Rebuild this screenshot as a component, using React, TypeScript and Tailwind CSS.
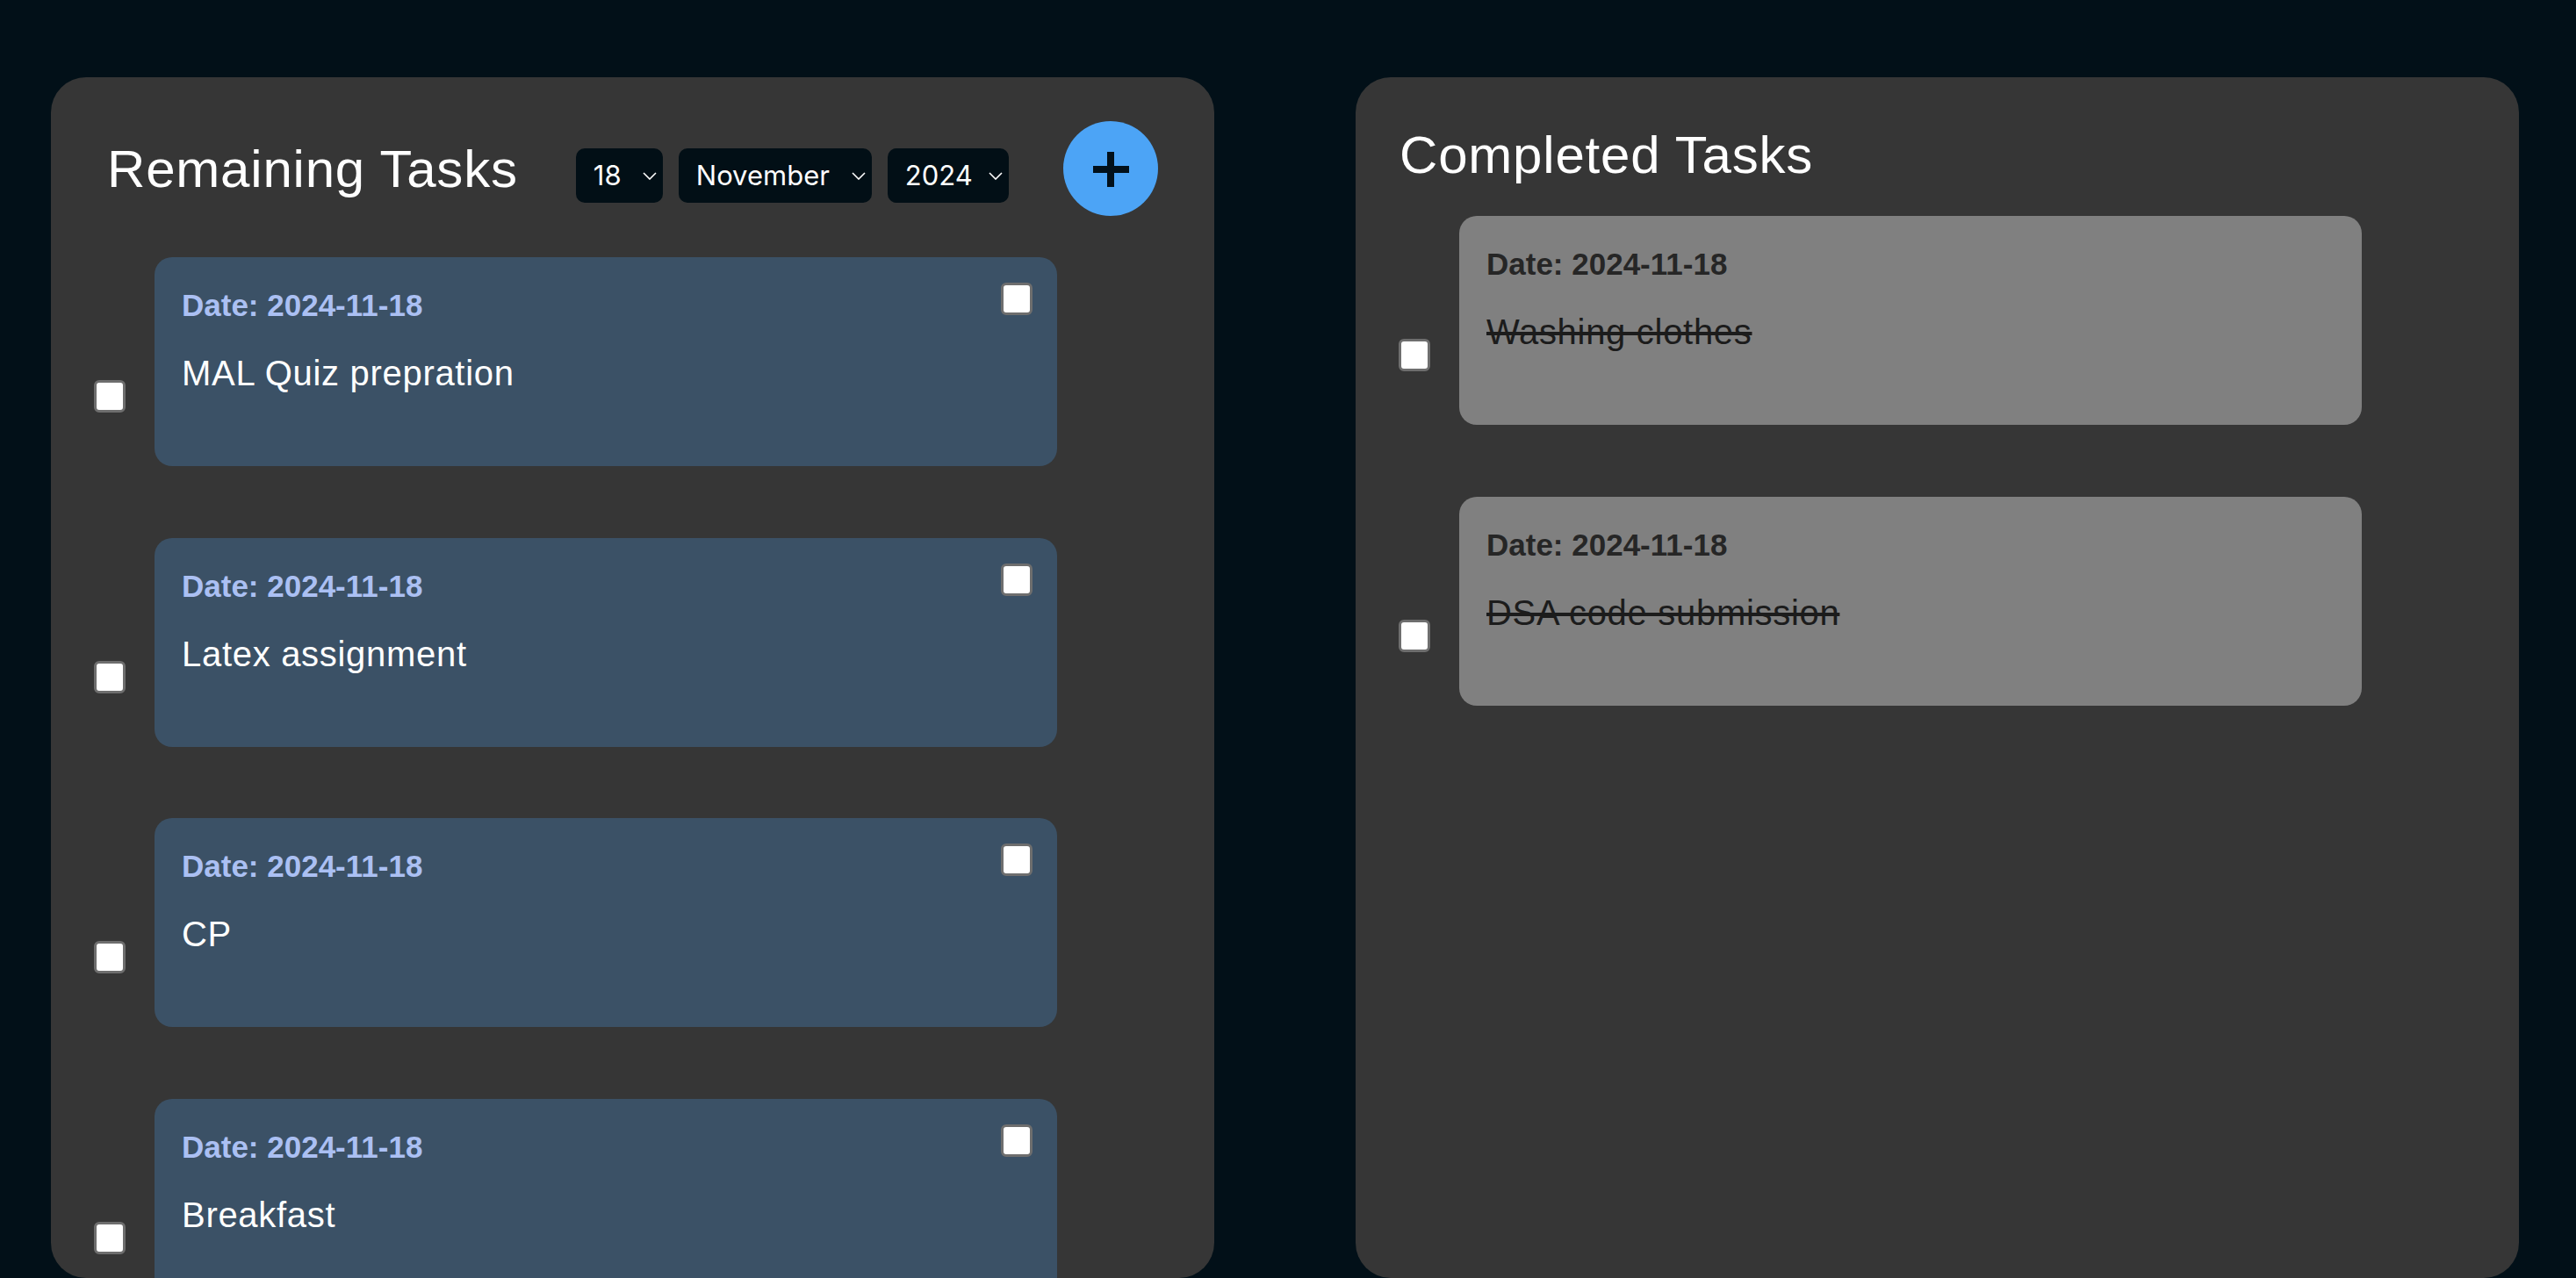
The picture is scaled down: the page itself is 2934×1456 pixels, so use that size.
import React from "react";

type Task = { id: number; date: string; title: string };

const REMAINING: Task[] = [
  { id: 1, date: "2024-11-18", title: "MAL Quiz prepration" },
  { id: 2, date: "2024-11-18", title: "Latex assignment" },
  { id: 3, date: "2024-11-18", title: "CP" },
  { id: 4, date: "2024-11-18", title: "Breakfast" },
];

const COMPLETED: Task[] = [
  { id: 5, date: "2024-11-18", title: "Washing clothes" },
  { id: 6, date: "2024-11-18", title: "DSA code submission" },
];

function Box() {
  return (
    <input
      type="checkbox"
      readOnly
      className="w-[36px] h-[37px] shrink-0 appearance-none bg-white border-[3px] border-[#6e6e6e] rounded-[6px]"
    />
  );
}

function Chevron() {
  return (
    <svg width="16" height="9" viewBox="0 0 16 9" fill="none" className="shrink-0">
      <path d="M1 1l7 7 7-7" stroke="white" strokeWidth="1.6" />
    </svg>
  );
}

function Picker({ label, width }: { label: string; width: string }) {
  return (
    <div
      className={`${width} h-[62px] flex items-center justify-between pl-[20px] pr-[7px] rounded-[10px] bg-[#020f16] text-white text-[31px] font-[family-name:Inter,sans-serif]`}
    >
      <span>{label}</span>
      <Chevron />
    </div>
  );
}

function RemainingCard({ task }: { task: Task }) {
  return (
    <div className="flex items-start gap-[33px]">
      <div className="mt-[140px]">
        <Box />
      </div>
      <div className="w-[1028px] h-[238px] rounded-[20px] bg-[#3b5166] pl-[31px] pr-[28px] pt-[29px]">
        <div className="flex items-start justify-between">
          <p className="mt-[6px] text-[35px] leading-[40px] font-bold text-[#abc0f3]">Date: {task.date}</p>
          <Box />
        </div>
        <p className="mt-[34px] text-[40px] leading-[46px] tracking-[0.7px] text-white">{task.title}</p>
      </div>
    </div>
  );
}

function CompletedCard({ task }: { task: Task }) {
  return (
    <div className="flex items-start gap-[33px]">
      <div className="mt-[140px]">
        <Box />
      </div>
      <div className="w-[1028px] h-[238px] rounded-[20px] bg-[#808080] pl-[31px] pr-[28px] pt-[35px]">
        <p className="text-[35px] leading-[40px] font-bold text-[#262626]">Date: {task.date}</p>
        <p className="mt-[34px] text-[40px] leading-[46px] tracking-[0.7px] text-[#1c1c1c] line-through">
          {task.title}
        </p>
      </div>
    </div>
  );
}

export default function App() {
  return (
    <div className="h-[1456px] overflow-hidden bg-[#021018] flex gap-[161px] pl-[58px] pr-[65px] pt-[88px] font-[family-name:Liberation_Sans,Arial,sans-serif]">
      <section className="flex-1 bg-[#363636] rounded-[40px] pl-[49px] pr-[50px] pt-[50px] pb-[60px]">
        <header className="h-[108px] flex items-center">
          <h2 className="ml-[15px] text-[60px] leading-[69px] tracking-[0.8px] text-white font-normal">
            Remaining Tasks
          </h2>
          <div className="ml-[66px] mt-[16px] flex gap-[18px]">
            <Picker label="18" width="w-[99px]" />
            <Picker label="November" width="w-[220px]" />
            <Picker label="2024" width="w-[138px]" />
          </div>
          <button className="ml-[62px] w-[108px] h-[108px] rounded-full bg-[#4ca4f6] flex items-center justify-center">
            <svg width="108" height="108" viewBox="0 0 108 108">
              <rect x="34" y="51" width="41" height="8" fill="#02101a" />
              <rect x="50" y="35" width="8" height="40" fill="#02101a" />
            </svg>
          </button>
        </header>
        <div className="mt-[47px] flex flex-col gap-[81.5px]">
          {REMAINING.map((t) => (
            <RemainingCard key={t.id} task={t} />
          ))}
        </div>
      </section>

      <section className="flex-1 bg-[#363636] rounded-[40px] pl-[49px] pr-[50px] pt-[50px] pb-[60px]">
        <h2 className="ml-[1px] mt-[4px] text-[60px] leading-[69px] tracking-[0.8px] text-white font-normal">
          Completed Tasks
        </h2>
        <div className="mt-[35px] flex flex-col gap-[81.5px]">
          {COMPLETED.map((t) => (
            <CompletedCard key={t.id} task={t} />
          ))}
        </div>
      </section>
    </div>
  );
}
